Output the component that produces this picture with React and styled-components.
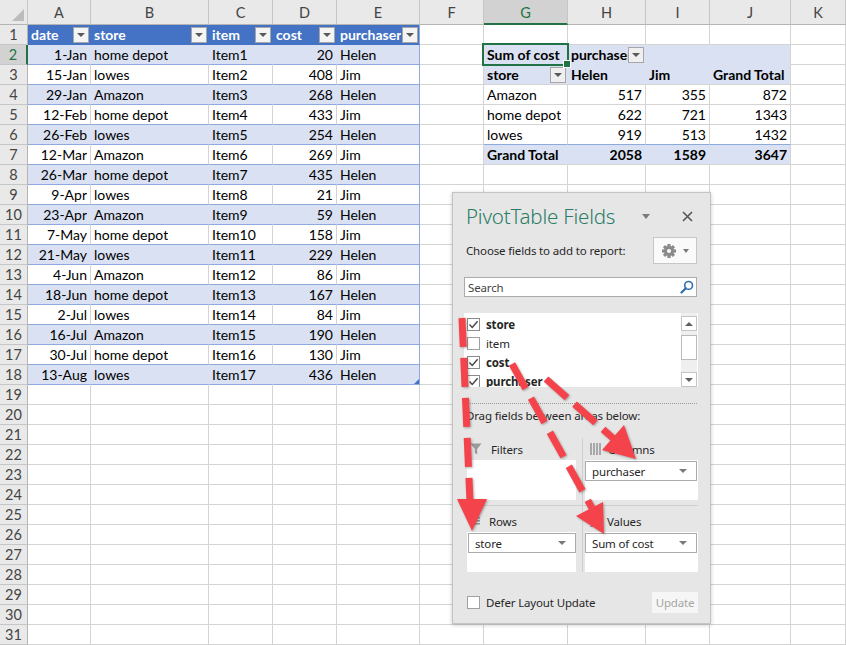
import React from "react";
import styled, {createGlobalStyle} from "styled-components";

const LIGHT = "#d9e1f2";
const GRID = "#d4d4d4";
const BAND = "#8ea9db";
const BLUE = "#4472c4";
const GREEN = "#217346";
const RED = "#f4434b";

const COLS = ["A", "B", "C", "D", "E", "F", "G", "H", "I", "J", "K"];
const HEAD = ["date", "store", "item", "cost", "purchaser"];

const DATA = [
    ["1-Jan", "home depot", "Item1", 20, "Helen"],
    ["15-Jan", "lowes", "Item2", 408, "Jim"],
    ["29-Jan", "Amazon", "Item3", 268, "Helen"],
    ["12-Feb", "home depot", "Item4", 433, "Jim"],
    ["26-Feb", "lowes", "Item5", 254, "Helen"],
    ["12-Mar", "Amazon", "Item6", 269, "Jim"],
    ["26-Mar", "home depot", "Item7", 435, "Helen"],
    ["9-Apr", "lowes", "Item8", 21, "Jim"],
    ["23-Apr", "Amazon", "Item9", 59, "Helen"],
    ["7-May", "home depot", "Item10", 158, "Jim"],
    ["21-May", "lowes", "Item11", 229, "Helen"],
    ["4-Jun", "Amazon", "Item12", 86, "Jim"],
    ["18-Jun", "home depot", "Item13", 167, "Helen"],
    ["2-Jul", "lowes", "Item14", 84, "Jim"],
    ["16-Jul", "Amazon", "Item15", 190, "Helen"],
    ["30-Jul", "home depot", "Item16", 130, "Jim"],
    ["13-Aug", "lowes", "Item17", 436, "Helen"],
];

const PIVOT = {
    2: [["Sum of cost"], ["purchaser", "btn"], [""], [""]],
    3: [["store", "btn"], ["Helen"], ["Jim"], ["Grand Total"]],
    4: ["Amazon", 517, 355, 872],
    5: ["home depot", 622, 721, 1343],
    6: ["lowes", 919, 513, 1432],
    7: ["Grand Total", 2058, 1589, 3647],
};

const FIELDS = [
    {name: "store", checked: true},
    {name: "item", checked: false},
    {name: "cost", checked: true},
    {name: "purchaser", checked: true},
];

const GlobalStyle = createGlobalStyle`
    html, body {
        margin: 0;
        padding: 0;
        background: #fff;
        overflow: hidden;
    }
    body {
        font-family: Lato, "Liberation Sans", sans-serif;
    }
`;

const Page = styled.div`
    position: relative;
    width: 846px;
    height: 645px;
    overflow: hidden;
`;

const Sheet = styled.div`
    display: grid;
    grid-template-columns: 28px 63px 118px 64px 64px 83px 64px 84px 78px 64px 81px 1fr;
    grid-template-rows: 25px repeat(31, 20px);
`;

const Corner = styled.div`
    position: relative;
    background: #e9e9e9;
    border-right: 1px solid #c6c6c6;
    border-bottom: 1px solid #b4b4b4;

    &::after {
        content: "";
        position: absolute;
        right: 3px;
        bottom: 3px;
        border-left: 12px solid transparent;
        border-bottom: 12px solid #bcbcbc;
    }
`;

const ColHead = styled.div`
    display: flex;
    align-items: center;
    justify-content: center;
    padding-top: 1px;
    font-size: 14.5px;
    color: ${p => p.$selected ? GREEN : "#444"};
    background: ${p => p.$selected ? "#d2d2d2" : "#e9e9e9"};
    border-right: 1px solid #c6c6c6;
    border-bottom: ${p => p.$selected ? `2px solid ${GREEN}` : "1px solid #b4b4b4"};
`;

const RowHead = styled.div`
    display: flex;
    align-items: center;
    justify-content: center;
    font-size: 14.5px;
    color: ${p => p.$selected ? GREEN : "#444"};
    background: ${p => p.$selected ? "#d2d2d2" : "#e9e9e9"};
    border-right: ${p => p.$selected ? `2px solid ${GREEN}` : "1px solid #b4b4b4"};
    border-bottom: 1px solid #c6c6c6;
`;

const Cell = styled.div`
    position: relative;
    display: flex;
    align-items: center;
    justify-content: ${p => p.$align === "right" ? "flex-end" : "flex-start"};
    min-width: 0;
    padding: 0 ${p => p.$btn ? 1 : 3}px 0 3px;
    background: ${p => p.$fill || "#fff"};
    border-right: 1px solid ${p => p.$right || GRID};
    border-bottom: 1px solid ${p => p.$bottom || GRID};
    font-size: 14px;
    font-weight: ${p => p.$bold ? 700 : 400};
    color: ${p => p.$color || "#000"};
    white-space: nowrap;
    overflow: ${p => p.$active ? "visible" : "hidden"};
    z-index: ${p => p.$active ? 2 : "auto"};

    &::after {
        content: "";
        display: ${p => p.$active ? "block" : "none"};
        position: absolute;
        left: -2px;
        top: -2px;
        right: -2px;
        bottom: -2px;
        border: 2px solid ${GREEN};
    }

    &::before {
        content: "";
        display: ${p => p.$active || p.$handle ? "block" : "none"};
        position: absolute;
        z-index: 3;
        right: ${p => p.$active ? -4 : 0}px;
        bottom: ${p => p.$active ? -4 : 0}px;
        width: ${p => p.$active ? 6 : 0}px;
        height: ${p => p.$active ? 6 : 0}px;
        background: ${p => p.$active ? GREEN : "transparent"};
        border: ${p => p.$active ? "1px solid #fff" : "none"};
        border-left: ${p => p.$handle ? "5px solid transparent" : ""};
        border-bottom: ${p => p.$handle ? `5px solid ${BLUE}` : ""};
    }
`;

const CellText = styled.span`
    overflow: hidden;
`;

const DropBtn = styled.span`
    flex-shrink: 0;
    display: flex;
    align-items: center;
    justify-content: center;
    width: 16px;
    height: 16px;
    margin-left: auto;
    box-sizing: border-box;
    border: 1px solid #a6a6a6;
    background: ${p => p.$pivot ? "#efefef" : "#f4f4f4"};

    &::before {
        content: "";
        border-left: 4px solid transparent;
        border-right: 4px solid transparent;
        border-top: 4px solid #595959;
        margin-top: 1px;
    }
`;

function cellAt(r, ci) {
    if (ci <= 4 && r <= 18) {
        if (r === 1) {
            return {text: HEAD[ci], fill: BLUE, color: "#fff", bold: true,
                right: ci === 4 ? BAND : BLUE, bottom: BLUE, btn: true};
        }
        const fill = r % 2 === 0 ? LIGHT : null;
        return {
            text: DATA[r - 2][ci],
            align: ci === 0 || ci === 3 ? "right" : "left",
            fill,
            right: ci === 4 ? BAND : (fill || GRID),
            bottom: BAND,
            handle: r === 18 && ci === 4,
        };
    }
    if (ci >= 6 && ci <= 9 && r >= 2 && r <= 7) {
        const k = ci - 6;
        const fill = r <= 3 || r === 7 ? LIGHT : null;
        const right = ci === 9 ? GRID : (fill || GRID);
        const bottom = r === 2 ? LIGHT : r === 6 ? BAND : GRID;
        if (r <= 3) {
            const [text, flag] = PIVOT[r][k];
            return {text, bold: true, fill, right, bottom, btn: flag === "btn", pivot: true, active: r === 2 && k === 0};
        }
        return {
            text: PIVOT[r][k],
            align: k === 0 ? "left" : "right",
            bold: r === 7,
            fill, right, bottom,
        };
    }
    return {};
}

/* ---------- PivotTable Fields pane ---------- */

const Pane = styled.aside`
    position: absolute;
    left: 452px;
    top: 192px;
    z-index: 5;
    width: 259px;
    height: 432px;
    box-sizing: border-box;
    display: flex;
    flex-direction: column;
    padding: 0 12px 0 11px;
    background: #e6e6e6;
    border: 1px solid #c4c4c4;
    box-shadow: 0 1px 4px rgba(0, 0, 0, 0.22);
    font-family: "Noto Sans", "Open Sans", sans-serif;
    font-size: 11.5px;
    letter-spacing: -0.15px;
    color: #262626;
`;

const TitleRow = styled.div`
    display: flex;
    align-items: center;
    height: 32px;
    margin-top: 7px;
    padding-left: 2px;
`;

const PaneTitle = styled.div`
    flex: 1;
    font-size: 20.5px;
    font-weight: 300;
    color: #2b7d67;
    letter-spacing: -0.2px;
`;

const Triangle = styled.span`
    display: inline-block;
    border-left: ${p => p.$w}px solid transparent;
    border-right: ${p => p.$w}px solid transparent;
    border-top: ${p => p.$h}px solid ${p => p.$color || "#7a7a7a"};
    border-bottom: ${p => p.$up ? `${p.$up}px solid ${p.$color}` : "none"};
`;

const TitleCaret = styled.span`
    display: flex;
    margin-right: 32px;
    margin-top: 1px;
`;

const CloseBtn = styled.span`
    display: flex;
    margin-right: 5px;
`;

const ChooseRow = styled.div`
    display: flex;
    align-items: center;
    justify-content: space-between;
    height: 27px;
    margin-top: 5px;
    padding-left: 2px;
`;

const GearButton = styled.span`
    display: flex;
    align-items: center;
    justify-content: center;
    gap: 6px;
    width: 44px;
    height: 27px;
    margin-right: 1px;
    box-sizing: border-box;
    background: #fafafa;
    border: 1px solid #c6c6c6;
`;

const SearchBox = styled.div`
    display: flex;
    align-items: center;
    justify-content: space-between;
    height: 20px;
    margin: 13px 1px 0 0;
    padding: 0 2px 0 3px;
    box-sizing: border-box;
    background: #fff;
    border: 1px solid #ababab;
    color: #444;
`;

const FieldList = styled.div`
    display: flex;
    height: 74px;
    margin-top: 16px;
    background: #fff;
    overflow: hidden;
`;

const Fields = styled.div`
    flex: 1;
    padding-top: 2px;
`;

const FieldItem = styled.div`
    display: flex;
    align-items: center;
    gap: 6px;
    height: 19px;
    padding-left: 3px;
    font-weight: ${p => p.$bold ? 700 : 400};
    color: #262626;
`;

const CheckBox = styled.span`
    display: flex;
    align-items: center;
    justify-content: center;
    width: 13px;
    height: 13px;
    box-sizing: border-box;
    background: #fff;
    border: 1px solid ${p => p.$dark ? "#8a8a8a" : "#a0a0a0"};
`;

const ScrollBar = styled.div`
    display: flex;
    flex-direction: column;
    width: 16px;
    margin-right: 1px;
    padding-top: 3px;
    background: #efefef;
`;

const ScrollBtn = styled.span`
    display: flex;
    align-items: center;
    justify-content: center;
    height: 15px;
    box-sizing: border-box;
    background: #fff;
    border: 1px solid #c4c4c4;
    margin-top: ${p => p.$down ? "auto" : "0"};
`;

const ScrollThumb = styled.span`
    height: 25px;
    margin-top: 4px;
    box-sizing: border-box;
    background: #fff;
    border: 1px solid #b9b9b9;
`;

const Divider = styled.div`
    margin: 16px 1px 0 2px;
    border-top: 1px dotted #9a9a9a;
`;

const Hint = styled.div`
    margin-top: 4px;
    padding-left: 2px;
    line-height: 16px;
`;

const Areas = styled.div`
    display: grid;
    grid-template-columns: 119px 1fr;
    margin-top: 14px;
`;

const Area = styled.div`
    display: flex;
    flex-direction: column;
    padding: ${p => p.$top ? "0 0 5px" : "4px 0 0"} ${p => p.$left ? "3px" : "2px"};
    padding-right: ${p => p.$left ? "6px" : "0"};
    border-right: ${p => p.$left ? "1px solid #cfcfcf" : "none"};
    border-bottom: ${p => p.$top ? "1px solid #cfcfcf" : "none"};
`;

const AreaHead = styled.div`
    display: flex;
    align-items: center;
    gap: ${p => p.$left ? 9 : 7}px;
    height: 22px;
    padding-left: ${p => p.$left ? 3 : 5}px;
    color: #262626;
`;

const AreaBox = styled.div`
    height: 40px;
    box-sizing: border-box;
    background: #fff;
    padding-top: 1px;
`;

const AreaItem = styled.div`
    display: flex;
    align-items: center;
    justify-content: space-between;
    height: 20px;
    margin: 0 ${p => p.$left ? 0 : 1}px 0 ${p => p.$left ? 1 : 0}px;
    padding: 0 9px 0 6px;
    box-sizing: border-box;
    background: #fff;
    border: 1px solid #ababab;
`;

const Footer = styled.div`
    display: flex;
    align-items: center;
    justify-content: space-between;
    height: 21px;
    margin-top: 20px;
`;

const DeferLabel = styled.span`
    display: flex;
    align-items: center;
    gap: 6px;
    padding-left: 3px;
`;

const UpdateButton = styled.span`
    display: flex;
    align-items: center;
    justify-content: center;
    width: 46px;
    height: 21px;
    background: #f6f6f6;
    color: #a6a6a6;
`;

function Gear() {
    return (
        <svg width="16" height="16" viewBox="0 0 16 16">
            <g fill="#8a8a8a">
                {[0, 45, 90, 135].map(a => (
                    <rect key={a} x="6.4" y="1" width="3.2" height="14" transform={`rotate(${a} 8 8)`}/>
                ))}
                <circle cx="8" cy="8" r="5"/>
            </g>
            <circle cx="8" cy="8" r="2.1" fill="#fafafa"/>
        </svg>
    );
}

function Magnifier() {
    return (
        <svg width="14" height="14" viewBox="0 0 14 14">
            <circle cx="8.6" cy="5.4" r="3.9" fill="none" stroke="#2f6fb0" strokeWidth="1.6"/>
            <line x1="5.8" y1="8.2" x2="1.5" y2="12.5" stroke="#2f6fb0" strokeWidth="2.2" strokeLinecap="round"/>
        </svg>
    );
}

function Check() {
    return (
        <svg width="11" height="11" viewBox="0 0 11 11">
            <path d="M1.5 5.6 L4.2 8.4 L9.6 2.2" fill="none" stroke="#444" strokeWidth="1.4"/>
        </svg>
    );
}

function Funnel() {
    return (
        <svg width="12" height="12" viewBox="0 0 12 12">
            <path d="M0.5 0.5 H11.5 L7.2 6 V11.5 L4.8 10 V6 Z" fill="#9a9a9a"/>
        </svg>
    );
}

function ColumnsIcon() {
    return (
        <svg width="11" height="12" viewBox="0 0 11 12">
            {[0, 3, 6, 9].map(x => <rect key={x} x={x} y="0" width="2" height="12" fill="#a8a8a8"/>)}
        </svg>
    );
}

function RowsIcon() {
    return (
        <svg width="10" height="8" viewBox="0 0 10 8">
            {[0, 3, 6].map(y => <rect key={y} x="0" y={y} width="10" height="1.6" fill="#9a9a9a"/>)}
        </svg>
    );
}

function SigmaIcon() {
    return (
        <svg width="10" height="12" viewBox="0 0 10 12">
            <path d="M9 1.5 V0.5 H1 L5.5 6 L1 11.5 H9 V10.5" fill="none" stroke="#9a9a9a" strokeWidth="1.4"/>
        </svg>
    );
}

function Close() {
    return (
        <svg width="11" height="11" viewBox="0 0 11 11">
            <path d="M1 1 L10 10 M10 1 L1 10" stroke="#555" strokeWidth="1.6"/>
        </svg>
    );
}

function FieldsPane() {
    return (
        <Pane>
            <TitleRow>
                <PaneTitle>PivotTable Fields</PaneTitle>
                <TitleCaret><Triangle $w={4} $h={5} $color="#7a7a7a"/></TitleCaret>
                <CloseBtn><Close/></CloseBtn>
            </TitleRow>
            <ChooseRow>
                <span>Choose fields to add to report:</span>
                <GearButton>
                    <Gear/>
                    <Triangle $w={3.5} $h={4} $color="#7a7a7a"/>
                </GearButton>
            </ChooseRow>
            <SearchBox>
                <span>Search</span>
                <Magnifier/>
            </SearchBox>
            <FieldList>
                <Fields>
                    {FIELDS.map(f => (
                        <FieldItem key={f.name} $bold={f.checked}>
                            <CheckBox $dark={f.checked}>{f.checked && <Check/>}</CheckBox>
                            {f.name}
                        </FieldItem>
                    ))}
                </Fields>
                <ScrollBar>
                    <ScrollBtn>
                        <Triangle $w={4} $h={0} $up={4} $color="#606060"/>
                    </ScrollBtn>
                    <ScrollThumb/>
                    <ScrollBtn $down>
                        <Triangle $w={4} $h={4} $color="#606060"/>
                    </ScrollBtn>
                </ScrollBar>
            </FieldList>
            <Divider/>
            <Hint>Drag fields between areas below:</Hint>
            <Areas>
                <Area $top $left>
                    <AreaHead $left><Funnel/>Filters</AreaHead>
                    <AreaBox/>
                </Area>
                <Area $top>
                    <AreaHead><ColumnsIcon/>Columns</AreaHead>
                    <AreaBox>
                        <AreaItem>purchaser<Triangle $w={4} $h={4} $color="#7a7a7a"/></AreaItem>
                    </AreaBox>
                </Area>
                <Area $left>
                    <AreaHead $left><RowsIcon/>Rows</AreaHead>
                    <AreaBox>
                        <AreaItem $left>store<Triangle $w={4} $h={4} $color="#7a7a7a"/></AreaItem>
                    </AreaBox>
                </Area>
                <Area>
                    <AreaHead><SigmaIcon/>Values</AreaHead>
                    <AreaBox>
                        <AreaItem>Sum of cost<Triangle $w={4} $h={4} $color="#7a7a7a"/></AreaItem>
                    </AreaBox>
                </Area>
            </Areas>
            <Footer>
                <DeferLabel><CheckBox/>Defer Layout Update</DeferLabel>
                <UpdateButton>Update</UpdateButton>
            </Footer>
        </Pane>
    );
}

/* ---------- annotation arrows drawn over the screenshot ---------- */

const Overlay = styled.svg`
    position: absolute;
    left: 0;
    top: 0;
    z-index: 10;
    pointer-events: none;
    filter: drop-shadow(1px 1px 1px rgba(0, 0, 0, 0.3));
`;

const ARROWS = [
    {from: [462, 318], to: [470, 502], head: [[457, 499], [487, 499], [472, 531]], dash: "29 11"},
    {from: [512, 364], to: [592, 508], head: [[576, 516], [603, 502], [604, 534]], dash: "28 11"},
    {from: [546, 379], to: [614, 439], head: [[602, 450], [624, 425], [636, 459]], dash: "28 10"},
];

function Arrows() {
    return (
        <Overlay width="846" height="645" viewBox="0 0 846 645">
            {ARROWS.map((a, i) => (
                <g key={i} fill={RED} stroke={RED}>
                    <line x1={a.from[0]} y1={a.from[1]} x2={a.to[0]} y2={a.to[1]}
                          strokeWidth="7" strokeDasharray={a.dash}/>
                    <polygon points={a.head.map(p => p.join(",")).join(" ")} stroke="none"/>
                </g>
            ))}
        </Overlay>
    );
}

export default function App() {
    return (
        <>
            <GlobalStyle/>
            <Page>
                <Sheet>
                    <Corner/>
                    {COLS.map(c => <ColHead key={c} $selected={c === "G"}>{c}</ColHead>)}
                    {Array.from({length: 31}, (_, i) => i + 1).map(r => (
                        <React.Fragment key={r}>
                            <RowHead $selected={r === 2}>{r}</RowHead>
                            {COLS.map((c, ci) => {
                                const d = cellAt(r, ci);
                                return (
                                    <Cell key={c}
                                          $align={d.align}
                                          $fill={d.fill}
                                          $right={d.right}
                                          $bottom={d.bottom}
                                          $bold={d.bold}
                                          $color={d.color}
                                          $btn={d.btn}
                                          $active={d.active}
                                          $handle={d.handle}>
                                        {d.text !== undefined && <CellText>{d.text}</CellText>}
                                        {d.btn && <DropBtn $pivot={d.pivot}/>}
                                    </Cell>
                                );
                            })}
                        </React.Fragment>
                    ))}
                </Sheet>
                <FieldsPane/>
                <Arrows/>
            </Page>
        </>
    );
}
